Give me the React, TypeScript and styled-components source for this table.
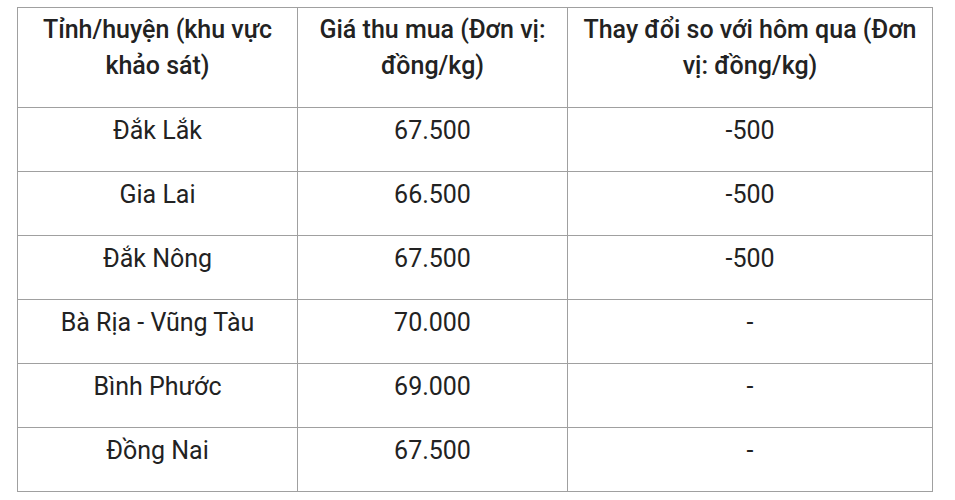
import React from "react";
import styled, { createGlobalStyle } from "styled-components";

const GlobalStyles = createGlobalStyle`
  body {
    margin: 0;
    background: #fff;
    font-family: Roboto, "Liberation Sans", sans-serif;
    color: #222;
  }
`;

const Page = styled.main`
  padding: 7px 0 0 17px;
`;

const Table = styled.table`
  border-collapse: collapse;
  table-layout: fixed;
  width: 915px;
  font-size: 25px;
`;

const Cell = styled.td<{ $head?: boolean }>`
  border: 1px solid #a0a0a0;
  padding: ${(p) => (p.$head ? "4px" : "5px")} 8px 0;
  text-align: center;
  vertical-align: top;
  font-weight: ${(p) => (p.$head ? 500 : 400)};
`;

const Text = styled.p<{ $head?: boolean }>`
  margin: 0 0 ${(p) => (p.$head ? "23px" : "22px")};
  line-height: 36px;
`;

const rows = [
  ["Đắk Lắk", "67.500", "-500"],
  ["Gia Lai", "66.500", "-500"],
  ["Đắk Nông", "67.500", "-500"],
  ["Bà Rịa - Vũng Tàu", "70.000", "-"],
  ["Bình Phước", "69.000", "-"],
  ["Đồng Nai", "67.500", "-"],
];

const headers = [
  "Tỉnh/huyện (khu vực khảo sát)",
  "Giá thu mua (Đơn vị: đồng/kg)",
  "Thay đổi so với hôm qua (Đơn vị: đồng/kg)",
];

export default function App() {
  return (
    <>
      <GlobalStyles />
      <Page>
        <Table>
          <colgroup>
            <col style={{ width: 280 }} />
            <col style={{ width: 270 }} />
            <col style={{ width: 365 }} />
          </colgroup>
          <thead>
            <tr>
              {headers.map((h) => (
                <Cell as="th" $head key={h}>
                  <Text $head>{h}</Text>
                </Cell>
              ))}
            </tr>
          </thead>
          <tbody>
            {rows.map((r) => (
              <tr key={r[0]}>
                {r.map((v, i) => (
                  <Cell key={i}>
                    <Text>{v}</Text>
                  </Cell>
                ))}
              </tr>
            ))}
          </tbody>
        </Table>
      </Page>
    </>
  );
}
